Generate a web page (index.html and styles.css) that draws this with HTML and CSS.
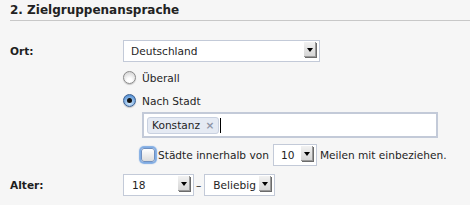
FILE: index.html
```html
<!DOCTYPE html>
<html lang="de">
<head>
  <meta charset="UTF-8">
  <title>Zielgruppenansprache</title>
  <link rel="stylesheet" href="styles.css">
</head>
<body>

  <div class="section">
    <h3 class="section-title">2. Zielgruppenansprache</h3>

    <!-- Ort -->
    <div class="form-row">
      <label class="form-label">Ort:</label>
      <div class="form-field">
        <div class="select select-country">
          <span class="select-value">Deutschland</span>
          <span class="select-arrow"></span>
        </div>

        <div class="radio-row radio-first">
          <span class="radio"></span>
          <span>Überall</span>
        </div>
        <div class="radio-row">
          <span class="radio checked"></span>
          <span>Nach Stadt</span>
        </div>

        <div class="city-block">
          <div class="token-input">
            <span class="token">Konstanz <span class="token-remove">×</span></span>
            <span class="caret"></span>
          </div>

          <div class="radius-row">
            <span class="checkbox"></span>
            <span>Städte innerhalb von</span>
            <div class="select select-radius">
              <span class="select-value">10</span>
              <span class="select-arrow"></span>
            </div>
            <span>Meilen mit einbeziehen.</span>
          </div>
        </div>
      </div>
    </div>

    <!-- Alter -->
    <div class="form-row age-row">
      <label class="form-label">Alter:</label>
      <div class="form-field age-field">
        <div class="select select-age">
          <span class="select-value">18</span>
          <span class="select-arrow"></span>
        </div>
        <span class="dash">–</span>
        <div class="select select-age-to">
          <span class="select-value">Beliebig</span>
          <span class="select-arrow"></span>
        </div>
      </div>
    </div>
  </div>

</body>
</html>
```

FILE: styles.css
```css
body {
  font-family: "DejaVu Sans", Verdana, sans-serif;
  font-size: 10.6px;
  color: #1e1e1e;
  background-color: #f6f6f6;
  margin: 0;
  padding: 0;
}

.section {
  padding-left: 10px;
}

.section-title {
  margin: 0;
  padding-top: 3px;
  height: 17px;
  font-size: 12px;
  font-weight: bold;
  color: #222;
  border-bottom: 1px solid #c8c8c8;
}

/* Form rows */
.form-row {
  display: grid;
  grid-template-columns: 113px 1fr;
  margin-top: 19px;
}

.form-label {
  font-weight: bold;
  line-height: 22px;
}

.age-row {
  margin-top: 8px;
}

.age-field {
  display: flex;
  align-items: center;
}

.dash {
  margin: 0 3px 0 2px;
}

/* Fake selects */
.select {
  position: relative;
  box-sizing: border-box;
  height: 22px;
  background: #fff;
  border: 1px solid #c3cad8;
  display: flex;
  align-items: center;
  padding-left: 7px;
}

.select-country {
  width: 197px;
}

.select-radius {
  width: 44px;
  margin: 0 3px 0 4px;
}

.select-age,
.select-age-to {
  width: 71px;
  padding-left: 8px;
}

.select-arrow {
  position: absolute;
  right: 3px;
  top: 1px;
  width: 12px;
  height: 15px;
  background: linear-gradient(#f2f2f2, #d4d4d4);
  box-shadow: 1px 1px 0 #6b6b6b, inset -1px -1px 0 #9a9a9a;
}

.select-arrow::after {
  content: "";
  position: absolute;
  left: 3px;
  top: 6px;
  border-left: 3px solid transparent;
  border-right: 3px solid transparent;
  border-top: 4px solid #000;
}

/* Radios */
.radio-row {
  display: flex;
  align-items: center;
  height: 23px;
  gap: 6px;
}

.radio-first {
  margin-top: 4px;
}

.radio {
  box-sizing: border-box;
  width: 13px;
  height: 13px;
  border-radius: 50%;
  border: 1px solid #8a8a8a;
  background: radial-gradient(circle at 50% 75%, #ffffff 20%, #d8d8d8 80%);
  box-shadow: 0 1px 1px rgba(0, 0, 0, 0.2);
}

.radio.checked {
  position: relative;
  border-color: #3b5f91;
  background: radial-gradient(circle at 50% 70%, #cfe6fb 10%, #5b95d6 75%);
}

.radio.checked::after {
  content: "";
  position: absolute;
  left: 3px;
  top: 3px;
  width: 5px;
  height: 5px;
  border-radius: 50%;
  background: #111;
}

/* City token input */
.city-block {
  margin-left: 19px;
}

.token-input {
  box-sizing: border-box;
  width: 296px;
  height: 26px;
  background: #fff;
  border: 2px solid #c3cad8;
  display: flex;
  align-items: center;
  padding-left: 3px;
}

.token {
  box-sizing: border-box;
  height: 17px;
  line-height: 15px;
  padding: 0 4px;
  background: #e5eaf3;
  border: 1px solid #c9d1e0;
  border-radius: 3px;
}

.token-remove {
  color: #8d95a6;
  font-weight: bold;
  margin-left: 2px;
}

.caret {
  width: 1px;
  height: 15px;
  background: #000;
  margin-left: 1px;
}

.radius-row {
  display: flex;
  align-items: center;
  margin-top: 6px;
  margin-left: -1px;
}

.checkbox {
  box-sizing: border-box;
  width: 14px;
  height: 14px;
  margin-right: 3px;
  border: 1px solid #6f8fbf;
  border-radius: 3px;
  background: linear-gradient(#ffffff, #dcdcdc);
  box-shadow: 0 0 1px 2px rgba(77, 140, 220, 0.7);
}
```
